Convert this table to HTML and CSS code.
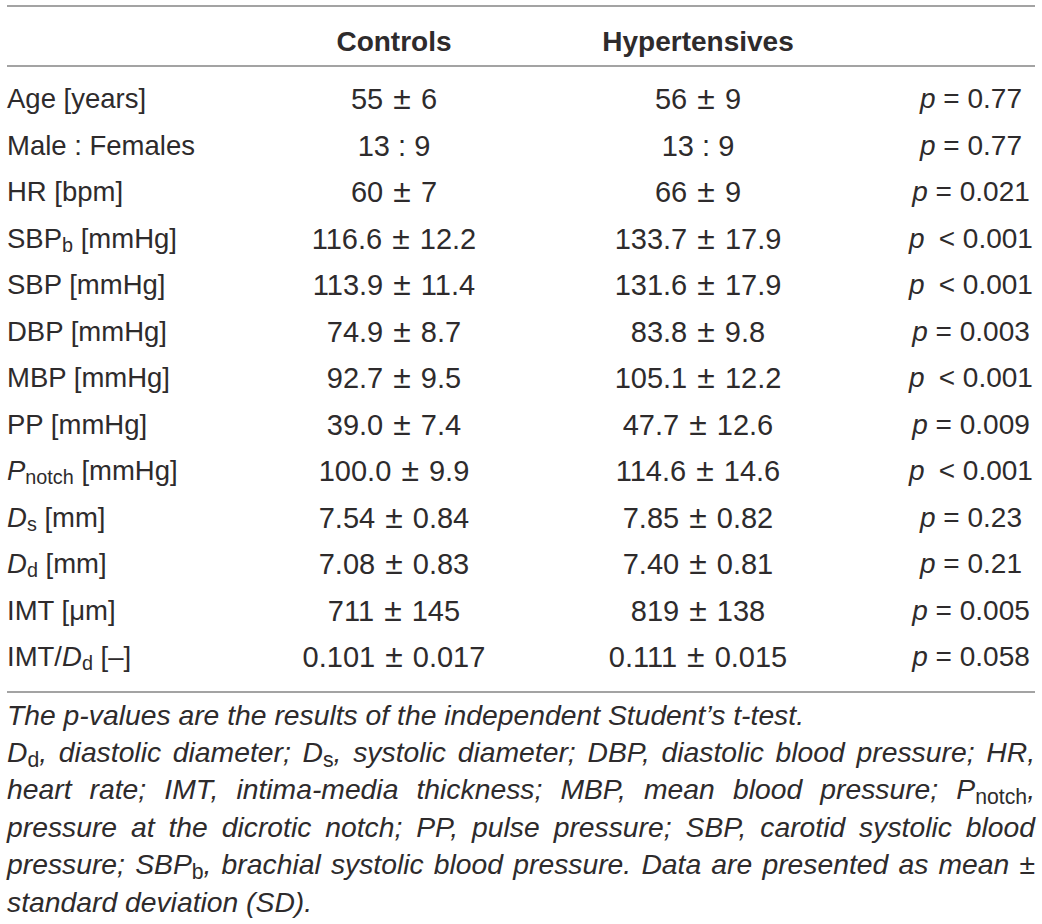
FILE: index.html
```html
<!DOCTYPE html>
<html lang="en">
<head>
<meta charset="UTF-8">
<title>Table</title>
<link rel="stylesheet" href="styles.css">
</head>
<body>
<div class="wrap">
<table class="data">
	<colgroup>
		<col class="c_label">
		<col class="c_ctrl">
		<col class="c_hyp">
		<col class="c_p">
	</colgroup>
	<thead>
		<tr><th></th><th>Controls</th><th>Hypertensives</th><th></th></tr>
	</thead>
	<tbody>
		<tr><td>Age [years]</td><td>55 <span class="pm">±</span> 6</td><td>56 <span class="pm">±</span> 9</td><td><i>p</i> = 0.77</td></tr>
		<tr><td>Male : Females</td><td>13 : 9</td><td>13 : 9</td><td><i>p</i> = 0.77</td></tr>
		<tr><td>HR [bpm]</td><td>60 <span class="pm">±</span> 7</td><td>66 <span class="pm">±</span> 9</td><td><i>p</i> = 0.021</td></tr>
		<tr><td>SBP<span class="sub">b</span> [mmHg]</td><td>116.6 <span class="pm">±</span> 12.2</td><td>133.7 <span class="pm">±</span> 17.9</td><td><i>p</i>&ensp;&lt; 0.001</td></tr>
		<tr><td>SBP [mmHg]</td><td>113.9 <span class="pm">±</span> 11.4</td><td>131.6 <span class="pm">±</span> 17.9</td><td><i>p</i>&ensp;&lt; 0.001</td></tr>
		<tr><td>DBP [mmHg]</td><td>74.9 <span class="pm">±</span> 8.7</td><td>83.8 <span class="pm">±</span> 9.8</td><td><i>p</i> = 0.003</td></tr>
		<tr><td>MBP [mmHg]</td><td>92.7 <span class="pm">±</span> 9.5</td><td>105.1 <span class="pm">±</span> 12.2</td><td><i>p</i>&ensp;&lt; 0.001</td></tr>
		<tr><td>PP [mmHg]</td><td>39.0 <span class="pm">±</span> 7.4</td><td>47.7 <span class="pm">±</span> 12.6</td><td><i>p</i> = 0.009</td></tr>
		<tr><td><i>P</i><span class="sub">notch</span> [mmHg]</td><td>100.0 <span class="pm">±</span> 9.9</td><td>114.6 <span class="pm">±</span> 14.6</td><td><i>p</i>&ensp;&lt; 0.001</td></tr>
		<tr><td><i>D</i><span class="sub">s</span> [mm]</td><td>7.54 <span class="pm">±</span> 0.84</td><td>7.85 <span class="pm">±</span> 0.82</td><td><i>p</i> = 0.23</td></tr>
		<tr><td><i>D</i><span class="sub">d</span> [mm]</td><td>7.08 <span class="pm">±</span> 0.83</td><td>7.40 <span class="pm">±</span> 0.81</td><td><i>p</i> = 0.21</td></tr>
		<tr><td>IMT [μm]</td><td>711 <span class="pm">±</span> 145</td><td>819 <span class="pm">±</span> 138</td><td><i>p</i> = 0.005</td></tr>
		<tr><td>IMT/<i>D</i><span class="sub">d</span> [–]</td><td>0.101 <span class="pm">±</span> 0.017</td><td>0.111 <span class="pm">±</span> 0.015</td><td><i>p</i> = 0.058</td></tr>
	</tbody>
</table>

<div class="note">
	<span class="ln last">The p-values are the results of the independent Student’s t-test.</span>
	<span class="ln">D<span class="nsub">d</span>, diastolic diameter; D<span class="nsub">s</span>, systolic diameter; DBP, diastolic blood pressure; HR,</span>
	<span class="ln">heart rate; IMT, intima-media thickness; MBP, mean blood pressure; P<span class="nsub">notch</span>,</span>
	<span class="ln">pressure at the dicrotic notch; PP, pulse pressure; SBP, carotid systolic blood</span>
	<span class="ln">pressure; SBP<span class="nsub">b</span>, brachial systolic blood pressure. Data are presented as mean ±</span>
	<span class="ln last">standard deviation (SD).</span>
</div>
</div>
</body>
</html>
```

FILE: styles.css
```css
*{margin:0;padding:0;}
body{background:#fff; color:#2e2b2c; font-family:"Liberation Sans", Arial, sans-serif;}
.wrap{width:1028px; margin:0 7px; padding-top:5px;}

.data{width:100%; border-collapse:collapse; table-layout:fixed;}
.c_label{width:292px;}
.c_ctrl{width:190px;}
.c_hyp{width:418px;}
.c_p{width:128px;}

.data thead th{height:51px; padding-bottom:7px; vertical-align:bottom; font-size:28px; font-weight:bold; text-align:center; border-top:2px solid #a3a3a3; border-bottom:2px solid #a3a3a3; white-space:nowrap;}
.data td{font-size:29px; line-height:46.5px; text-align:center; white-space:nowrap;}
.data td:first-child{font-size:27.5px; text-align:left;}
.data td:last-child{font-size:28px;}
.data tbody tr:first-child td{padding-top:9px;}
.data tbody tr:last-child td{padding-bottom:10px; border-bottom:2px solid #a3a3a3;}
.sub{font-size:0.72em; vertical-align:-0.22em; line-height:0;}
.pm{font-size:1.1em; margin:0 2px; line-height:0;}

.note{font-style:italic; font-size:28.3px; line-height:37.4px; padding-top:4px;}
.note .ln{display:block; text-align:justify; text-align-last:justify; white-space:nowrap;}
.note .ln.last{text-align-last:left;}
.nsub{font-style:normal; font-size:0.75em; vertical-align:-0.25em; line-height:0;}
```
